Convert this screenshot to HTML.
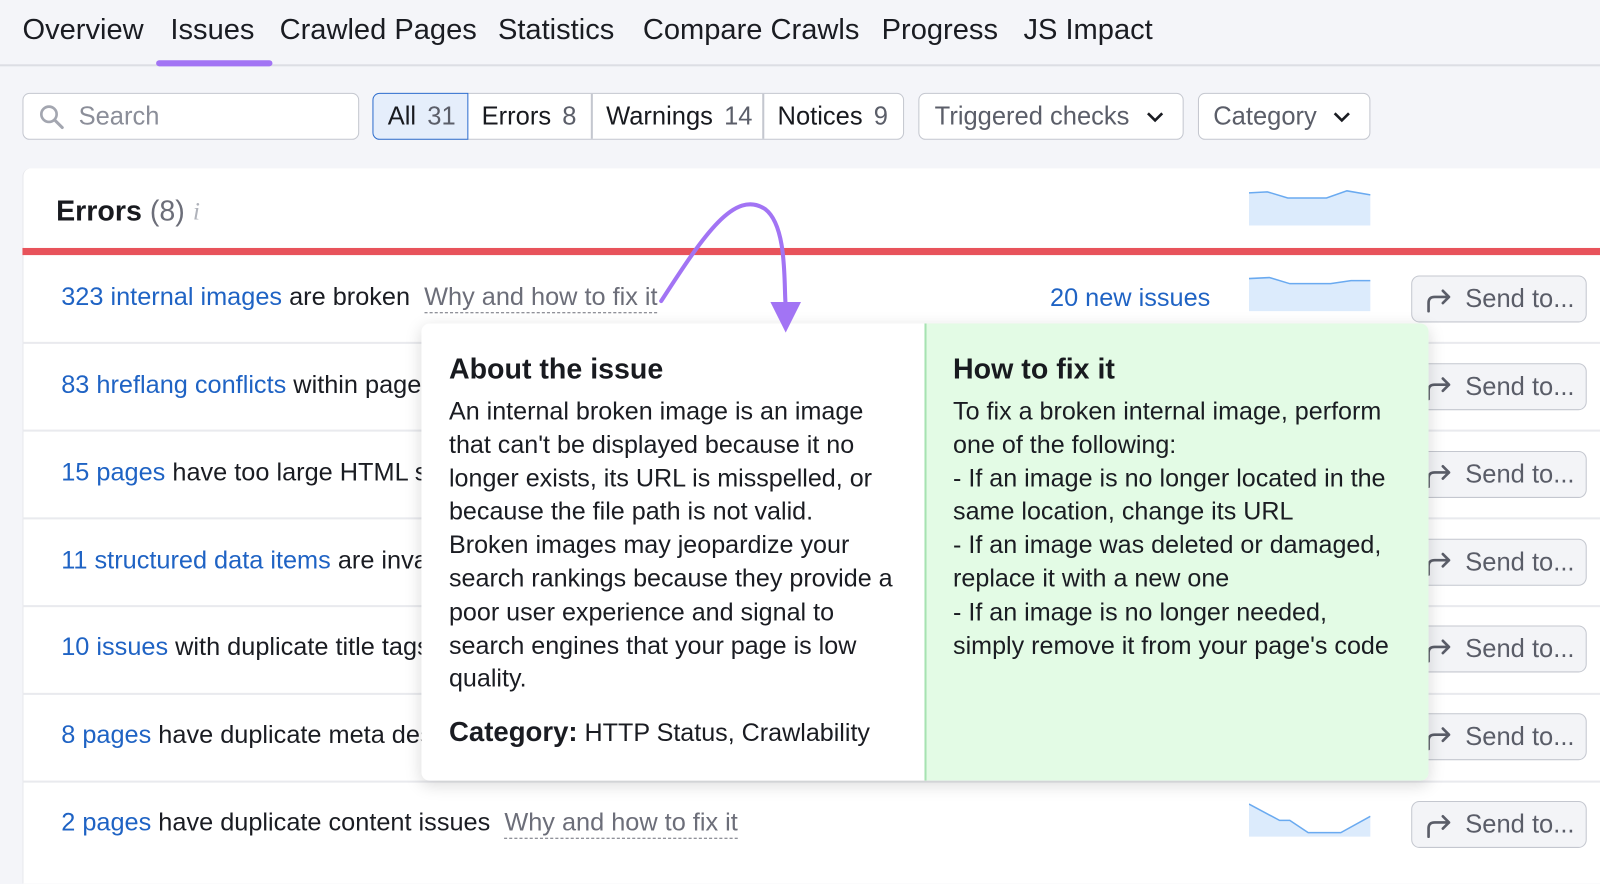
<!DOCTYPE html>
<html><head><meta charset="utf-8"><style>
*{margin:0;padding:0;box-sizing:border-box}
body{width:1600px;height:866px;overflow:hidden;background:#f4f5f9;font-family:"Liberation Sans",Arial,sans-serif;color:#181a1f;position:relative}
#w{position:absolute;left:0;top:0;width:1568px;height:849px;transform:scale(1.0204);transform-origin:0 0}
.a{position:absolute;white-space:nowrap}
.tab{font-size:28.5px;top:13px;color:#1a1c22}
.box{position:absolute;border:1.5px solid #c4c7cf;border-radius:7px;background:#fff;height:46px;top:91px}
.ft{font-size:25px;top:100px}
.row{font-size:24.8px;color:#1a1c22}
.lk{color:#1f63c4}
.why{color:#6c6e79;border-bottom:1.5px dashed #6c6e79;padding-bottom:1px}
.sep{position:absolute;left:22px;width:1578px;height:2px;background:#e9eaee}
.btn{position:absolute;left:1383px;width:172px;height:46px;border:1.5px solid #c4c7cf;border-radius:8px;background:#f3f4f7;font-size:25px;color:#5a5d68}
.btn span{position:absolute;left:52px;top:8px}
.btn svg{position:absolute;left:12px;top:10px}
.tt{font-size:24.6px;line-height:32.8px;color:#1a1c22}
</style></head><body><div id="w">
<div class="a tab" style="left:22px">Overview</div>
<div class="a tab" style="left:167px">Issues</div>
<div class="a tab" style="left:274px">Crawled Pages</div>
<div class="a tab" style="left:488px">Statistics</div>
<div class="a tab" style="left:630px">Compare Crawls</div>
<div class="a tab" style="left:864px">Progress</div>
<div class="a tab" style="left:1003px">JS Impact</div>
<div class="a" style="left:0;top:63px;width:1600px;height:2px;background:#dcdee4"></div>
<div class="a" style="left:153px;top:59px;width:114px;height:6px;background:#a274f4;border-radius:3px"></div>

<div class="box" style="left:22px;width:330px"></div>
<svg class="a" style="left:37px;top:101px" width="28" height="28" viewBox="0 0 28 28"><circle cx="11" cy="11" r="7.5" fill="none" stroke="#a3a6b0" stroke-width="2.6"/><path d="M16.5 16.5 L24 24" stroke="#a3a6b0" stroke-width="3" stroke-linecap="round"/></svg>
<div class="a ft" style="left:77px;color:#8b8e99">Search</div>

<div class="box" style="left:365px;width:521px"></div>
<div class="a" style="left:365px;top:91px;width:94px;height:46px;background:#e5eefb;border:1.5px solid #2f6fcf;border-radius:7px 0 0 7px"></div>
<div class="a" style="left:579px;top:92px;width:1.5px;height:44px;background:#c4c7cf"></div>
<div class="a" style="left:747px;top:92px;width:1.5px;height:44px;background:#c4c7cf"></div>
<div class="a ft" style="left:380px">All <span style="color:#5b5e69;margin-left:4px">31</span></div>
<div class="a ft" style="left:472px">Errors <span style="color:#5b5e69;margin-left:4px">8</span></div>
<div class="a ft" style="left:594px">Warnings <span style="color:#5b5e69;margin-left:4px">14</span></div>
<div class="a ft" style="left:762px">Notices <span style="color:#5b5e69;margin-left:4px">9</span></div>

<div class="box" style="left:900px;width:260px"></div>
<div class="a ft" style="left:916px;color:#5b5e69">Triggered checks</div>
<svg class="a" style="left:1122px;top:107px" width="20" height="14"><path d="M3 4 L10 11 L17 4" fill="none" stroke="#1a1c22" stroke-width="2.6"/></svg>
<div class="box" style="left:1174px;width:169px"></div>
<div class="a ft" style="left:1189px;color:#5b5e69">Category</div>
<svg class="a" style="left:1305px;top:107px" width="20" height="14"><path d="M3 4 L10 11 L17 4" fill="none" stroke="#1a1c22" stroke-width="2.6"/></svg>

<div class="a" style="left:22px;top:165px;width:1578px;height:701px;background:#fff;border-radius:8px 0 0 0;border-left:1px solid #e6e7eb"></div>
<div class="a" style="left:55px;top:191px;font-size:28px;font-weight:bold">Errors <span style="font-weight:normal;color:#6c6e79">(8)</span></div>
<div class="a" style="left:189px;top:194px;font-size:25px;color:#b0b3bb;font-style:italic;font-family:'Liberation Serif',serif">i</div>
<svg class="a" style="left:1224px;top:185px" width="119" height="36"><path d="M0 4 L18 3 L38 9 L76 9 L96 2 L119 6 L119 36 L0 36Z" fill="#dcebfc"/><path d="M0 4 L18 3 L38 9 L76 9 L96 2 L119 6" fill="none" stroke="#6aaaf0" stroke-width="1.5"/></svg>
<div class="a" style="left:22px;top:243px;width:1578px;height:7px;background:#e8535b"></div>

<div class="a row" style="left:60px;top:278px"><span class="lk">323 internal images</span> are broken&nbsp; <span class="why">Why and how to fix it</span></div>
<div class="a" style="left:1029px;top:279px;font-size:24.8px;color:#1f63c4">20 new issues</div>
<svg class="a" style="left:1224px;top:270px" width="119" height="35"><path d="M0 3 L20 2 L40 8 L80 8 L100 5 L119 5 L119 35 L0 35Z" fill="#dcebfc"/><path d="M0 3 L20 2 L40 8 L80 8 L100 5 L119 5" fill="none" stroke="#6aaaf0" stroke-width="1.5"/></svg>
<div class="sep" style="top:335px"></div>
<div class="a row" style="left:60px;top:364px"><span class="lk">83 hreflang conflicts</span> within page</div>
<div class="sep" style="top:421px"></div>
<div class="a row" style="left:60px;top:450px"><span class="lk">15 pages</span> have too large HTML si</div>
<div class="sep" style="top:507px"></div>
<div class="a row" style="left:60px;top:536px"><span class="lk">11 structured data items</span> are inval</div>
<div class="sep" style="top:593px"></div>
<div class="a row" style="left:60px;top:621px"><span class="lk">10 issues</span> with duplicate title tags</div>
<div class="sep" style="top:679px"></div>
<div class="a row" style="left:60px;top:707px"><span class="lk">8 pages</span> have duplicate meta des</div>
<div class="sep" style="top:765px"></div>
<div class="a row" style="left:60px;top:793px"><span class="lk">2 pages</span> have duplicate content issues&nbsp; <span class="why">Why and how to fix it</span></div>
<svg class="a" style="left:1224px;top:786px" width="119" height="34"><path d="M0 2 L30 18 L40 18 L58 30 L90 30 L119 14 L119 34 L0 34Z" fill="#dcebfc"/><path d="M0 2 L30 18 L40 18 L58 30 L90 30 L119 14" fill="none" stroke="#6aaaf0" stroke-width="1.5"/></svg>

<div class="btn" style="top:270px"><svg width="28" height="26"><path d="M4 24 V16 Q4 10 10 10 H24 M18 4 L24 10 L18 16" fill="none" stroke="#5a5d68" stroke-width="2.6" stroke-linecap="round" stroke-linejoin="round"/></svg><span>Send to...</span></div>
<div class="btn" style="top:356px"><svg width="28" height="26"><path d="M4 24 V16 Q4 10 10 10 H24 M18 4 L24 10 L18 16" fill="none" stroke="#5a5d68" stroke-width="2.6" stroke-linecap="round" stroke-linejoin="round"/></svg><span>Send to...</span></div>
<div class="btn" style="top:442px"><svg width="28" height="26"><path d="M4 24 V16 Q4 10 10 10 H24 M18 4 L24 10 L18 16" fill="none" stroke="#5a5d68" stroke-width="2.6" stroke-linecap="round" stroke-linejoin="round"/></svg><span>Send to...</span></div>
<div class="btn" style="top:528px"><svg width="28" height="26"><path d="M4 24 V16 Q4 10 10 10 H24 M18 4 L24 10 L18 16" fill="none" stroke="#5a5d68" stroke-width="2.6" stroke-linecap="round" stroke-linejoin="round"/></svg><span>Send to...</span></div>
<div class="btn" style="top:613px"><svg width="28" height="26"><path d="M4 24 V16 Q4 10 10 10 H24 M18 4 L24 10 L18 16" fill="none" stroke="#5a5d68" stroke-width="2.6" stroke-linecap="round" stroke-linejoin="round"/></svg><span>Send to...</span></div>
<div class="btn" style="top:699px"><svg width="28" height="26"><path d="M4 24 V16 Q4 10 10 10 H24 M18 4 L24 10 L18 16" fill="none" stroke="#5a5d68" stroke-width="2.6" stroke-linecap="round" stroke-linejoin="round"/></svg><span>Send to...</span></div>
<div class="btn" style="top:785px"><svg width="28" height="26"><path d="M4 24 V16 Q4 10 10 10 H24 M18 4 L24 10 L18 16" fill="none" stroke="#5a5d68" stroke-width="2.6" stroke-linecap="round" stroke-linejoin="round"/></svg><span>Send to...</span></div>

<div class="a" style="left:413px;top:317px;width:987px;height:448px;background:#fff;border-radius:8px;box-shadow:0 4px 16px rgba(0,0,0,.15);overflow:hidden">
  <div class="a" style="left:493px;top:0;width:494px;height:448px;background:#e3fbe5;border-left:2px solid #a6e3b1"></div>
  <div class="a" style="left:27px;top:29px;font-size:28px;font-weight:bold">About the issue</div>
  <div class="a tt" style="left:27px;top:71px">An internal broken image is an image<br>that can't be displayed because it no<br>longer exists, its URL is misspelled, or<br>because the file path is not valid.<br>Broken images may jeopardize your<br>search rankings because they provide a<br>poor user experience and signal to<br>search engines that your page is low<br>quality.</div>
  <div class="a tt" style="left:27px;top:384px"><b style="font-size:27px">Category:</b> HTTP Status, Crawlability</div>
  <div class="a" style="left:521px;top:29px;font-size:28px;font-weight:bold">How to fix it</div>
  <div class="a tt" style="left:521px;top:71px">To fix a broken internal image, perform<br>one of the following:<br>- If an image is no longer located in the<br>same location, change its URL<br>- If an image was deleted or damaged,<br>replace it with a new one<br>- If an image is no longer needed,<br>simply remove it from your page's code</div>
</div>

<svg class="a" style="left:0;top:0" width="1600" height="866"><path d="M648 295 C690 230 720 185 750 205 C772 222 768 280 770 300" fill="none" stroke="#a274f4" stroke-width="4" stroke-linecap="round"/><path d="M755 296 L785 296 L770 326Z" fill="#a274f4"/></svg>
</div></body></html>
